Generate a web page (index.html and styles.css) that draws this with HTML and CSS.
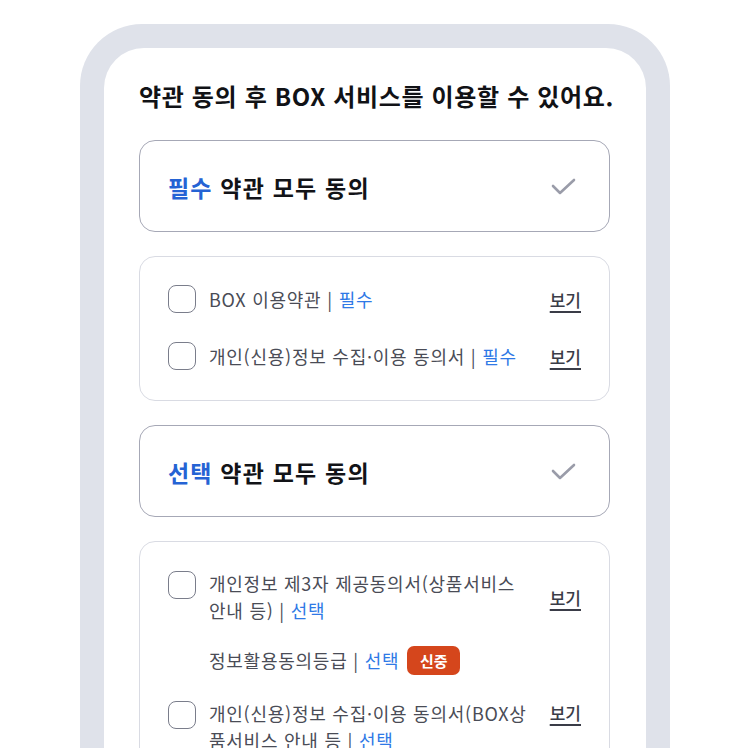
FILE: index.html
```html
<!DOCTYPE html>
<html lang="ko">
<head>
<meta charset="utf-8">
<link rel="stylesheet" href="styles.css">
</head>
<body>
<div class="frame">
  <div class="panel">
    <h1 class="title">약관 동의 후 BOX 서비스를 이용할 수 있어요.</h1>

    <div class="all-card">
      <span class="all-text"><span class="tag">필수</span> 약관 모두 동의</span>
      <svg class="check" width="26" height="18" viewBox="0 0 26 18"><polyline points="2,8 9,15 23,2" fill="none" stroke="#9a9ca9" stroke-width="2.6" stroke-linecap="round" stroke-linejoin="round"/></svg>
    </div>

    <div class="list-card">
      <div class="row">
        <span class="box"></span>
        <span class="label">BOX 이용약관 <span class="sep">|</span> <span class="kind">필수</span></span>
        <a class="view">보기</a>
      </div>
      <div class="row">
        <span class="box"></span>
        <span class="label">개인(신용)정보 수집·이용 동의서 <span class="sep">|</span> <span class="kind">필수</span></span>
        <a class="view">보기</a>
      </div>
    </div>

    <div class="all-card">
      <span class="all-text"><span class="tag">선택</span> 약관 모두 동의</span>
      <svg class="check" width="26" height="18" viewBox="0 0 26 18"><polyline points="2,8 9,15 23,2" fill="none" stroke="#9a9ca9" stroke-width="2.6" stroke-linecap="round" stroke-linejoin="round"/></svg>
    </div>

    <div class="list-card opt">
      <div class="row multi">
        <span class="box"></span>
        <span class="label">개인정보 제3자 제공동의서(상품서비스 안내 등) <span class="sep">|</span> <span class="kind">선택</span></span>
        <a class="view">보기</a>
      </div>
      <div class="sub">
        <span class="label">정보활용동의등급 <span class="sep">|</span> <span class="kind">선택</span></span>
        <span class="badge">신중</span>
      </div>
      <div class="row multi top">
        <span class="box"></span>
        <span class="label">개인(신용)정보 수집·이용 동의서(BOX상품서비스 안내 등 <span class="sep">|</span> <span class="kind">선택</span></span>
        <a class="view">보기</a>
      </div>
    </div>
  </div>
</div>
</body>
</html>
```

FILE: styles.css
```css
* { box-sizing: border-box; }
html, body { margin: 0; padding: 0; background: #fff; }
body {
  font-family: "Noto Sans CJK KR", "Noto Sans", sans-serif;
  height: 748px;
  overflow: hidden;
}
.frame {
  margin: 24px 0 0 80px;
  width: 590px;
  background: #dfe2ea;
  border-radius: 62px 62px 0 0;
  padding: 24px 24px 0;
  height: 760px;
}
.panel {
  background: #fff;
  border-radius: 40px 40px 0 0;
  padding: 31px 36px 0 35px;
  height: 740px;
}
.title {
  margin: 0 0 27px;
  font-size: 24px;
  line-height: 34px;
  font-weight: 700;
  color: #111216;
  letter-spacing: 0.65px;
  white-space: nowrap;
}
.all-card {
  display: flex;
  align-items: center;
  justify-content: space-between;
  height: 92px;
  border: 1.5px solid #a6a8b6;
  border-radius: 16px;
  padding: 0 32px 0 28px;
  margin-bottom: 24px;
}
.all-text {
  font-size: 23px;
  font-weight: 700;
  color: #121317;
  letter-spacing: 1.2px;
  padding-top: 1px;
}
.tag { color: #2563d4; }
.check { display: block; margin-top: 1px; }
.list-card {
  border: 1.5px solid #d9dbe3;
  border-radius: 16px;
  padding: 28px 28px 30px 28px;
  margin-bottom: 24px;
  display: flex;
  flex-direction: column;
  gap: 29px;
}
.list-card.opt { gap: 0; }
.row {
  display: flex;
  align-items: center;
  gap: 13px;
}
.box {
  flex: none;
  width: 28px;
  height: 28px;
  border: 1.5px solid #7a7d8b;
  border-radius: 8px;
}
.label {
  flex: 1;
  font-size: 18px;
  line-height: 27px;
  color: #4a4c56;
  letter-spacing: 0.75px;
}
.sep { color: #4a4c56; }
.kind { color: #2f79e6; }
.view {
  flex: none;
  margin-left: 8px;
  font-size: 17px;
  font-weight: 500;
  color: #3a3c47;
  text-decoration: underline;
  text-underline-offset: 4px;
  text-decoration-thickness: 1.5px;
}
.multi .box { align-self: flex-start; margin-top: 1px; }
.multi.top { margin-top: 25px; align-items: flex-start; }
.multi.top .view { margin-top: 0; }
.sub {
  display: flex;
  align-items: center;
  gap: 8px;
  padding-left: 41px;
  margin-top: 22px;
}
.sub .label { flex: none; }
.badge {
  display: inline-flex;
  align-items: center;
  justify-content: center;
  width: 53px;
  height: 29px;
  border-radius: 7px;
  background: #d5461c;
  color: #fff;
  font-size: 15px;
  font-weight: 700;
}
```
